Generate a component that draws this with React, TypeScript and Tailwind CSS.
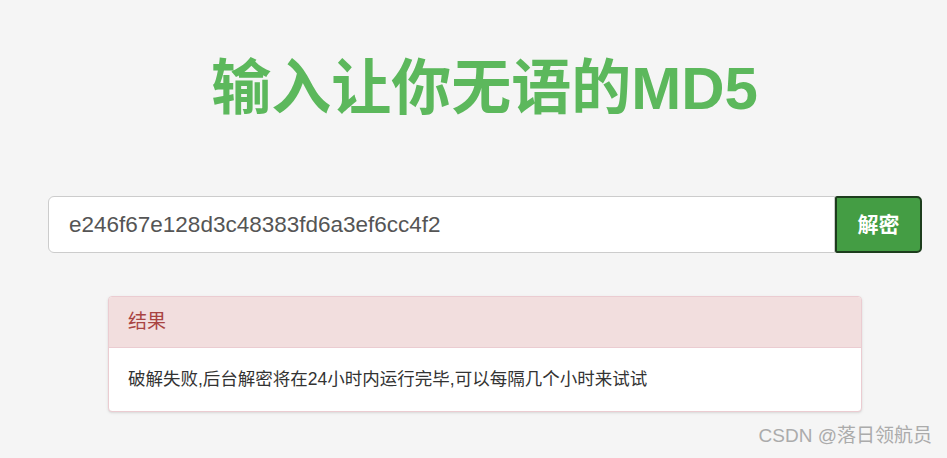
export default function App() {
  return (
    <div
      className="relative w-[947px] h-[458px] overflow-hidden bg-[#f5f5f5]"
      style={{ fontFamily: '"Liberation Sans", "Noto Sans CJK SC", sans-serif' }}
    >
      {/* Title */}
      <h1 className="pt-[51px] pl-[22px] text-center text-[60px] leading-[76px] font-bold text-[#5cb85c]">
        输入让你无语的MD5
      </h1>

      {/* Search bar */}
      <div className="mt-[69px] ml-[48px] flex w-[874px] h-[57px]">
        <div className="flex-1 flex items-center bg-white border border-[#cccccc] rounded-l-[6px] pl-[20px] text-[22.5px] text-[#555555]">
          e246f67e128d3c48383fd6a3ef6cc4f2
        </div>
        <button className="w-[87px] h-full flex items-center justify-center bg-[#449d44] border-2 border-[#1d3d1d] rounded-r-[5px] rounded-l-[2px] text-white text-[21px] font-bold">
          解密
        </button>
      </div>

      {/* Result panel */}
      <div className="mt-[43px] ml-[108px] w-[754px] border border-[#ebccd1] rounded-[4px] bg-white shadow-sm overflow-hidden">
        <div className="h-[51px] flex items-center px-[19px] bg-[#f2dede] border-b border-[#ebccd1] text-[19px] text-[#a94442]">
          结果
        </div>
        <div className="h-[63px] flex items-center px-[19px] text-[17.5px] text-[#333333]">
          破解失败,后台解密将在24小时内运行完毕,可以每隔几个小时来试试
        </div>
      </div>

      {/* Watermark */}
      <div className="absolute right-[15px] bottom-[8px] text-[19px] text-[#ababab]">
        CSDN @落日领航员
      </div>
    </div>
  );
}
